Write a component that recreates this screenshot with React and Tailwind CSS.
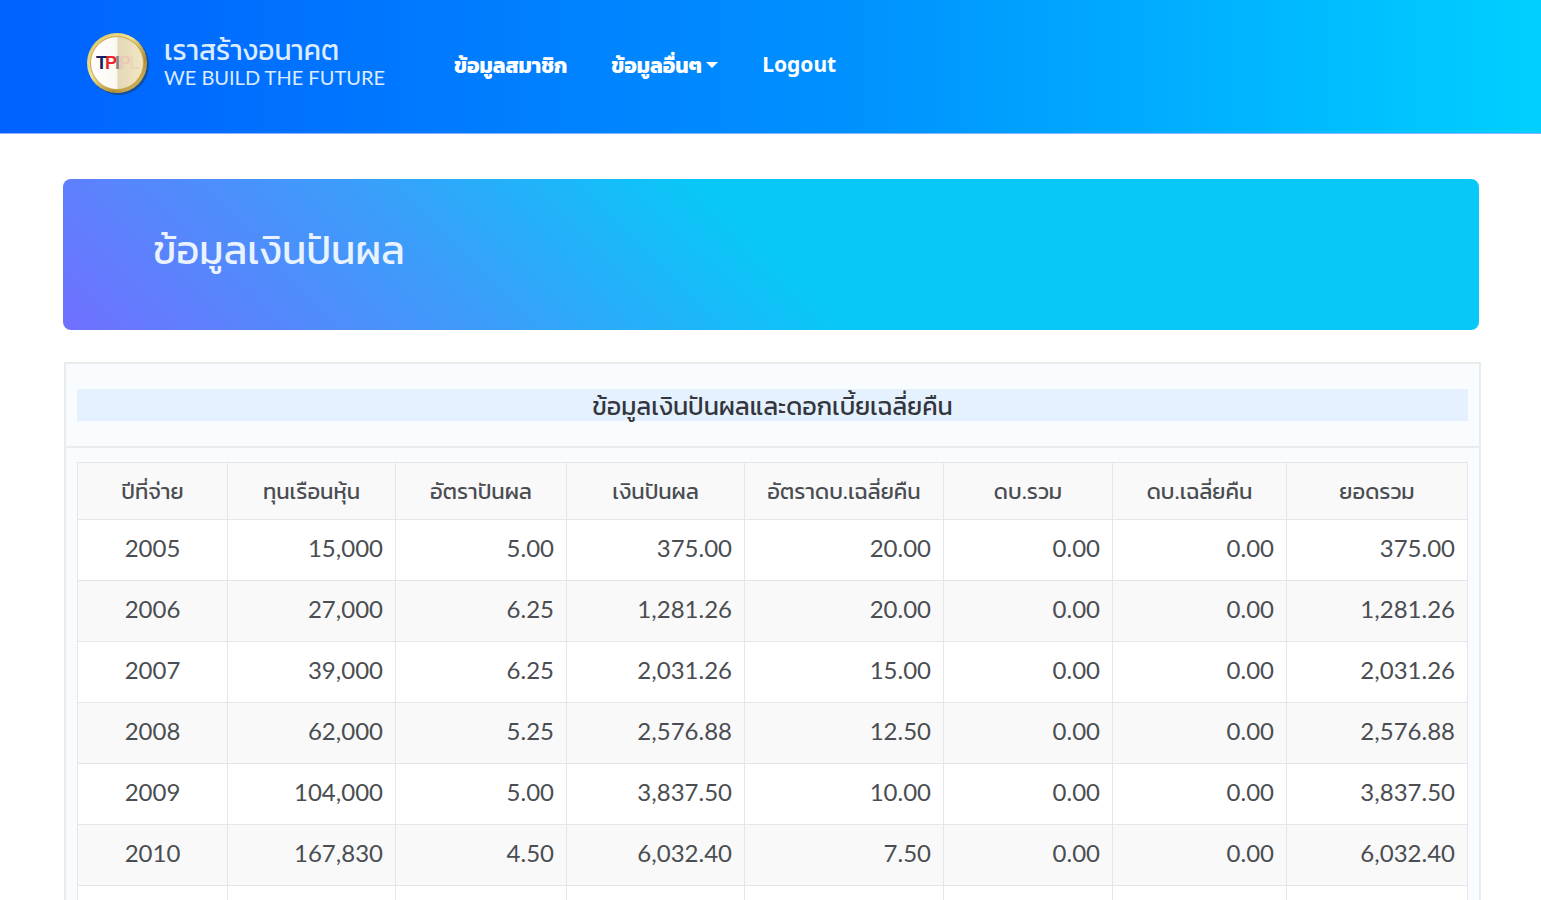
const columns = [
  { label: "ปีที่จ่าย", width: "w-[150px]" },
  { label: "ทุนเรือนหุ้น", width: "w-[168px]" },
  { label: "อัตราปันผล", width: "w-[171px]" },
  { label: "เงินปันผล", width: "w-[178px]" },
  { label: "อัตราดบ.เฉลี่ยคืน", width: "w-[199px]" },
  { label: "ดบ.รวม", width: "w-[169px]" },
  { label: "ดบ.เฉลี่ยคืน", width: "w-[174px]" },
  { label: "ยอดรวม", width: "w-[181px]" },
];

const rows = [
  ["2005", "15,000", "5.00", "375.00", "20.00", "0.00", "0.00", "375.00"],
  ["2006", "27,000", "6.25", "1,281.26", "20.00", "0.00", "0.00", "1,281.26"],
  ["2007", "39,000", "6.25", "2,031.26", "15.00", "0.00", "0.00", "2,031.26"],
  ["2008", "62,000", "5.25", "2,576.88", "12.50", "0.00", "0.00", "2,576.88"],
  ["2009", "104,000", "5.00", "3,837.50", "10.00", "0.00", "0.00", "3,837.50"],
  ["2010", "167,830", "4.50", "6,032.40", "7.50", "0.00", "0.00", "6,032.40"],
];

function Logo() {
  return (
    <svg viewBox="0 0 64 64" className="size-16 shrink-0" aria-hidden="true">
      <defs>
        <linearGradient id="rim" x1="0" y1="0" x2="1" y2="1">
          <stop offset="0" stopColor="#d9c163" />
          <stop offset="0.4" stopColor="#f3e28f" />
          <stop offset="0.7" stopColor="#b08d35" />
          <stop offset="1" stopColor="#e8cf72" />
        </linearGradient>
        <linearGradient id="face" x1="0" y1="0" x2="1" y2="0">
          <stop offset="0" stopColor="#ffffff" />
          <stop offset="0.49" stopColor="#fbf8f2" />
          <stop offset="0.52" stopColor="#e3d8b8" />
          <stop offset="1" stopColor="#f3e6c4" />
        </linearGradient>
      </defs>
      <circle cx="33" cy="34" r="30" fill="#17447f" opacity="0.7" />
      <circle cx="31" cy="32" r="30" fill="url(#rim)" />
      <circle cx="31" cy="32" r="27" fill="#c9ab55" />
      <circle cx="31" cy="32" r="26" fill="url(#face)" />
      <g fontFamily="Liberation Sans, sans-serif" fontWeight="700" fontSize="18">
        <text x="10" y="38" fill="#14205e">T</text>
        <text x="19" y="38" fill="#e8262b">P</text>
        <text x="29" y="38" fill="#8c7f86">I</text>
        <text x="33" y="38" fill="#ecc9b4">P</text>
        <text x="43" y="38" fill="#e6d9bb">L</text>
      </g>
    </svg>
  );
}

function Navbar() {
  return (
    <header className="flex h-[134px] items-center border-b border-[#8fb4ff] bg-[linear-gradient(90deg,#0061ff_0%,#0092ff_56%,#00d0ff_100%)] pb-1 pl-[86px] text-white">
      <a href="#" className="flex w-[368px] items-center gap-3.5 pb-1">
        <Logo />
        <span className="flex flex-col pb-1 text-[#dcecff]">
          <span className="text-[28px] leading-8">เราสร้างอนาคต</span>
          <span className="text-xl leading-6">WE BUILD THE FUTURE</span>
        </span>
      </a>

      {/* Main menu */}
      <nav className="flex items-center gap-11 text-[21px] font-bold">
        <a href="#">ข้อมูลสมาชิก</a>
        <button type="button" className="flex items-center gap-1">
          ข้อมูลอื่นๆ
          <span className="border-x-[6px] border-t-[6px] border-x-transparent border-t-white" />
        </button>
        <a href="#" className="font-['Noto_Sans',sans-serif]">
          Logout
        </a>
      </nav>
    </header>
  );
}

function DividendTable() {
  return (
    <table className="w-full table-fixed border-collapse bg-white text-2xl">
      <thead>
        <tr className="h-[57px] bg-[#f9f9f9] text-[22px]">
          {columns.map((col) => (
            <th
              key={col.label}
              className={`${col.width} border border-[#e4e6e8] p-0 font-normal whitespace-nowrap`}
            >
              {col.label}
            </th>
          ))}
        </tr>
      </thead>
      <tbody>
        {rows.map((row) => (
          <tr key={row[0]} className="h-[61px] even:bg-[#f9f9f9]">
            {row.map((value, i) => (
              <td
                key={i}
                className={`border border-[#e4e6e8] px-3 pt-0 pb-1 ${i === 0 ? "text-center" : "text-right"}`}
              >
                {value}
              </td>
            ))}
          </tr>
        ))}
        <tr className="h-[61px]">
          {columns.map((col) => (
            <td key={col.label} className="border border-[#e4e6e8]" />
          ))}
        </tr>
      </tbody>
    </table>
  );
}

export default function App() {
  return (
    <div className="h-screen overflow-hidden bg-white font-[Lato,Kanit,'Noto_Sans_Thai','Noto_Sans',sans-serif] text-[#4a4d51]">
      <Navbar />

      <main className="pt-[45px] pr-[60px] pl-[63px]">
        {/* Page title */}
        <div className="mr-0.5 flex h-[151px] items-center rounded-lg bg-[linear-gradient(45deg,#7070ff_0%,#3d9cfa_27%,#08c8f8_50%)] px-[90px] pb-3">
          <h1 className="text-[40px] leading-[60px] text-[#e8f3ff]">
            ข้อมูลเงินปันผล
          </h1>
        </div>

        <section className="mt-8 ml-px border-2 border-[#e9eced] bg-[#f8fcff]">
          <div className="border-b-2 border-[#e9eced] px-[11px] py-[25px]">
            <h2 className="bg-[#e5f1ff] text-center text-[25px] leading-8 text-[#33363c]">
              ข้อมูลเงินปันผลและดอกเบี้ยเฉลี่ยคืน
            </h2>
          </div>
          <div className="px-[11px] pt-3.5">
            <DividendTable />
          </div>
        </section>
      </main>
    </div>
  );
}
